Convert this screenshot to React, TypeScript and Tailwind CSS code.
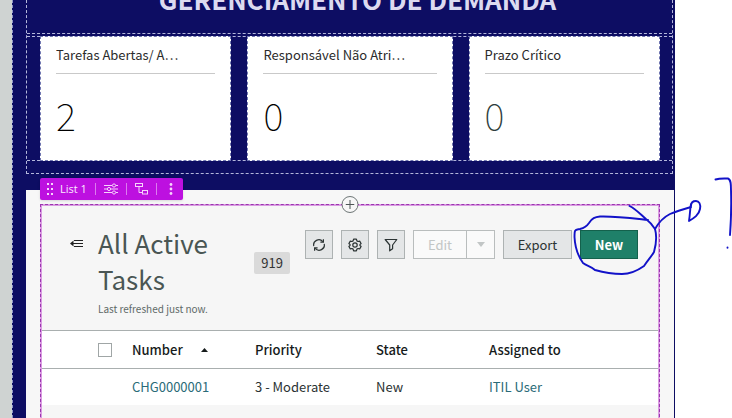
import type { ReactNode } from "react";

interface ScoreCard {
  title: string;
  value: number;
  tone: string;
}

interface Task {
  number: string;
  priority: string;
  state: string;
  assignedTo: string;
}

const CARDS: ScoreCard[] = [
  { title: "Tarefas Abertas/ A…", value: 2, tone: "text-black" },
  { title: "Responsável Não Atri…", value: 0, tone: "text-black" },
  { title: "Prazo Crítico", value: 0, tone: "text-[#2e3d3d]" },
];

const TASKS: Task[] = [
  { number: "CHG0000001", priority: "3 - Moderate", state: "New", assignedTo: "ITIL User" },
];

function DemandHeader() {
  return (
    <section className="mr-px border border-t-0 border-dashed border-[#b4b7dc] pb-3">
      <div className="flex h-[34px] items-end justify-center border-b border-dashed border-[#b4b7dc] pb-[18px] pl-4">
        <h1 className="text-[26px] leading-8 font-bold whitespace-nowrap text-[#dcdaf0]">
          GERENCIAMENTO DE DEMANDA
        </h1>
      </div>
      <div className="mt-0.5 grid grid-cols-[14fr_15fr_14fr] gap-4 border-y border-dashed border-[#b4b7dc] pr-3 pl-[13px]">
        {CARDS.map((card) => (
          <article
            key={card.title}
            className="-my-px min-w-0 border border-dashed border-[#7076b0] bg-white px-[15px] pt-2 pb-[22px]"
          >
            <h2 className="truncate border-b border-[#c9c9c9] pb-2 text-[13px] leading-5 text-[#2b2b2b]">
              {card.title}
            </h2>
            <p className={`pt-[18px] text-[38px] leading-[46px] font-thin ${card.tone}`}>{card.value}</p>
          </article>
        ))}
      </div>
    </section>
  );
}

function SlidersIcon() {
  return (
    <svg width="14" height="12" viewBox="0 0 14 12" fill="none" stroke="currentColor" strokeWidth="1">
      <path d="M0 2.5h8M12 2.5h2M0 6h3M7 6h7M0 9.5h8M12 9.5h2" />
      <circle cx="10" cy="2.5" r="1.6" />
      <circle cx="5" cy="6" r="1.6" />
      <circle cx="10" cy="9.5" r="1.6" />
    </svg>
  );
}

function TreeIcon() {
  return (
    <svg width="13" height="12" viewBox="0 0 13 12" fill="none" stroke="currentColor" strokeWidth="1">
      <rect x="0.5" y="0.5" width="7" height="3" />
      <path d="M4 3.5v6h3.5" />
      <rect x="7.5" y="7.5" width="5" height="3.5" />
    </svg>
  );
}

function DotsIcon() {
  return (
    <svg width="4" height="12" viewBox="0 0 4 12" fill="currentColor">
      <circle cx="2" cy="1.5" r="1.4" />
      <circle cx="2" cy="6" r="1.4" />
      <circle cx="2" cy="10.5" r="1.4" />
    </svg>
  );
}

function GripIcon() {
  return (
    <svg width="8" height="14" viewBox="0 0 8 14" fill="currentColor">
      <path d="M1 1h2v2H1zM5 1h2v2H5zM1 6h2v2H1zM5 6h2v2H5zM1 11h2v2H1zM5 11h2v2H5z" />
    </svg>
  );
}

function ElementToolbar() {
  return (
    <div className="absolute -top-7 -left-0.5 flex h-[22px] items-center rounded-xs bg-[#bd10e0] px-1.5 text-[#f6d5fb] shadow-sm">
      <GripIcon />
      <span className="ml-1.5 font-['Open_Sans',sans-serif] text-[11px] leading-4 font-medium text-[#fbeaff]">List 1</span>
      <span className="mx-2 h-3 w-px bg-[#dc7cef]" />
      <button type="button" aria-label="Configure"><SlidersIcon /></button>
      <span className="mx-2 h-3 w-px bg-[#dc7cef]" />
      <button type="button" aria-label="Structure"><TreeIcon /></button>
      <span className="mx-2 h-3 w-px bg-[#dc7cef]" />
      <button type="button" aria-label="More" className="px-1"><DotsIcon /></button>
    </div>
  );
}

function IconButton({ label, children }: { label: string; children: ReactNode }) {
  return (
    <button
      type="button"
      aria-label={label}
      className="flex h-[29px] w-7 items-center justify-center border border-[#adb2b2] bg-[#e4e6e7] text-[#2b3333]"
    >
      {children}
    </button>
  );
}

function ListActions() {
  return (
    <div className="mt-6 flex shrink-0 items-start gap-2 text-[13px]">
      <IconButton label="Refresh">
        <svg width="14" height="14" viewBox="0 0 14 14" fill="none" stroke="currentColor" strokeWidth="1.2">
          <path d="M1.8 8.2A5.2 5.2 0 0 1 10.8 3.6M12.2 5.8A5.2 5.2 0 0 1 3.2 10.4" />
          <path d="M11.4 1.2v3H8.4M2.6 12.8v-3h3" />
        </svg>
      </IconButton>
      <IconButton label="Settings">
        <svg width="14" height="14" viewBox="0 0 14 14" fill="none" stroke="currentColor" strokeWidth="1.2" strokeLinejoin="round">
          <path d="M5.6 1.2h2.8l.5 1.7 1.1.6 1.7-.4 1.4 2.4-1.2 1.2v.6l1.2 1.2-1.4 2.4-1.7-.4-1.1.6-.5 1.7H5.6l-.5-1.7-1.1-.6-1.7.4L.9 8.5l1.2-1.2v-.6L.9 5.5l1.4-2.4 1.7.4 1.1-.6z" />
          <circle cx="7" cy="7" r="2.2" />
        </svg>
      </IconButton>
      <IconButton label="Filter">
        <svg width="14" height="14" viewBox="0 0 14 14" fill="none" stroke="currentColor" strokeWidth="1.2" strokeLinejoin="round">
          <path d="M1.2 1.500h11.600L8.600 7v3.800L5.700 12.800V7z" />
        </svg>
      </IconButton>
      <div className="flex h-[29px] border border-[#b9bdbd] bg-[#fafafa] text-[#c2c6c6]">
        <button type="button" disabled className="w-[52px]">Edit</button>
        <button type="button" disabled aria-label="More edit options" className="flex w-7 items-center justify-center border-l border-[#b9bdbd]">
          <svg width="8" height="5" viewBox="0 0 8 5" fill="currentColor"><path d="M0 0h8L4 5z" /></svg>
        </button>
      </div>
      <button type="button" className="h-[29px] w-[69px] border border-[#adb2b2] bg-[#e4e6e7] text-[#2b3333]">
        Export
      </button>
      <button type="button" className="h-[29px] w-[58px] border border-[#14614c] bg-[#1f8069] font-bold text-white">
        New
      </button>
    </div>
  );
}

function TaskTable() {
  return (
    <table className="w-full table-fixed border-t border-[#a9afaf] bg-white text-left text-[13px] leading-5 text-[#2b3333]">
      <colgroup>
        <col className="w-[90px]" />
        <col className="w-[123px]" />
        <col className="w-[121px]" />
        <col className="w-[113px]" />
        <col />
      </colgroup>
      <thead>
        <tr className="h-[38px] border-b border-[#a9afaf] text-[#161b1b]">
          <th className="pl-14">
            <input
              type="checkbox"
              aria-label="Select all"
              className="block size-3.5 appearance-none border border-[#a0a6a6] bg-white"
            />
          </th>
          <th className="font-medium">
            <span className="flex items-center">
              Number
              <svg className="ml-[18px]" width="7" height="4" viewBox="0 0 7 4" fill="currentColor"><path d="M0 4h7L3.5 0z" /></svg>
            </span>
          </th>
          <th className="font-medium">Priority</th>
          <th className="font-medium">State</th>
          <th className="font-medium">Assigned to</th>
        </tr>
      </thead>
      <tbody>
        {TASKS.map((task) => (
          <tr key={task.number} className="h-9">
            <td />
            <td><a href="#" className="text-[#2a6b78]">{task.number}</a></td>
            <td>{task.priority}</td>
            <td>{task.state}</td>
            <td><a href="#" className="text-[#2a6b78]">{task.assignedTo}</a></td>
          </tr>
        ))}
      </tbody>
    </table>
  );
}

function TaskList() {
  return (
    <section className="relative mx-3.5 -mb-1 flex-1 border-2 border-[#d99be1] bg-[#f6f6f6] outline-1 -outline-offset-1 outline-dashed outline-[#9c35b0]">
      <ElementToolbar />
      <button
        type="button"
        aria-label="Add element"
        className="absolute -top-2.5 left-1/2 flex size-[17px] -translate-x-1/2 items-center justify-center rounded-full border border-[#6d7575] bg-[#f7f7f7] text-[#4d5555]"
      >
        <svg width="9" height="9" viewBox="0 0 9 9" stroke="currentColor"><path d="M4.5 0v9M0 4.5h9" /></svg>
      </button>
      <header className="flex items-start pr-5 pb-3 pl-7">
        <button type="button" aria-label="Show lists" className="mt-[33px] text-[#222]">
          <svg width="14" height="9" viewBox="0 0 14 9" stroke="currentColor">
            <path d="M0 4.5L3.5 1.5v6z" fill="currentColor" stroke="none" />
            <path d="M4 1.5h9M3 4.5h10M4 7.5h9" />
          </svg>
        </button>
        <div className="mt-[19px] ml-3.5 min-w-0 flex-1">
          <h2 className="text-[26px] leading-9 text-[#4a5654]">
            All Active
            <br />
            Tasks
          </h2>
          <p className="mt-1 pb-px text-[10px] leading-4 text-[#5f6a68]">Last refreshed just now.</p>
        </div>
        <span className="mt-[46px] mr-[15px] rounded-xs bg-[#dadada] px-[7px] text-[13px] leading-[22px] text-[#333]">919</span>
        <ListActions />
      </header>
      <TaskTable />
    </section>
  );
}

function PenMarks() {
  return (
    <svg
      className="pointer-events-none absolute top-40 right-0"
      width="172"
      height="130"
      viewBox="560 160 172 130"
      fill="none"
      stroke="#1212c8"
      strokeWidth="1.9"
      strokeLinecap="round"
      strokeLinejoin="round"
    >
      <path d="M629.500 206C636 209 641 215 646 219C650 222 653 226 655 229C657 236 656.500 243 654 252C651 257 648 260 644 266C637 271 630 274 622 274C613 274 602 272 595 270C591 266 587 266 583 263C578 256 575 247 574.500 237C574.500 229 575 230 580 229C584 228 587 226 589 223C592 218 595 217 600 216.500C615 216 630 218 648 220" />
      <path d="M655 229C659 222 664 217 670 214C677 211 684 209 691 207" />
      <path d="M691 204C690 209 690 215 689 221C694 218 699 215 700 209C701 204 699 201 696 201C693 201 691 203 691 206" />
      <path d="M715.500 179.500C720 178 725 178.500 728 178.500C731 179.500 731 185 731 190C731.500 207 731 222 730 235" />
      <path d="M727.500 247.500v.2" />
    </svg>
  );
}

export default function App() {
  return (
    <div className="relative flex h-screen overflow-hidden bg-white font-['Noto_Sans_CJK_JP',sans-serif]">
      <div className="w-3 shrink-0 bg-[#cfd3d2]" />
      <main className="flex min-w-0 flex-1 flex-col border-l border-dashed border-[#8f95c8] bg-[#0d0d63] pr-px pl-[13px]">
        <DemandHeader />
        <div className="mt-4 flex flex-1 flex-col bg-[#f7f7f7] pt-3.5">
          <TaskList />
        </div>
      </main>
      <div className="w-[57px] shrink-0" />
      <PenMarks />
    </div>
  );
}
